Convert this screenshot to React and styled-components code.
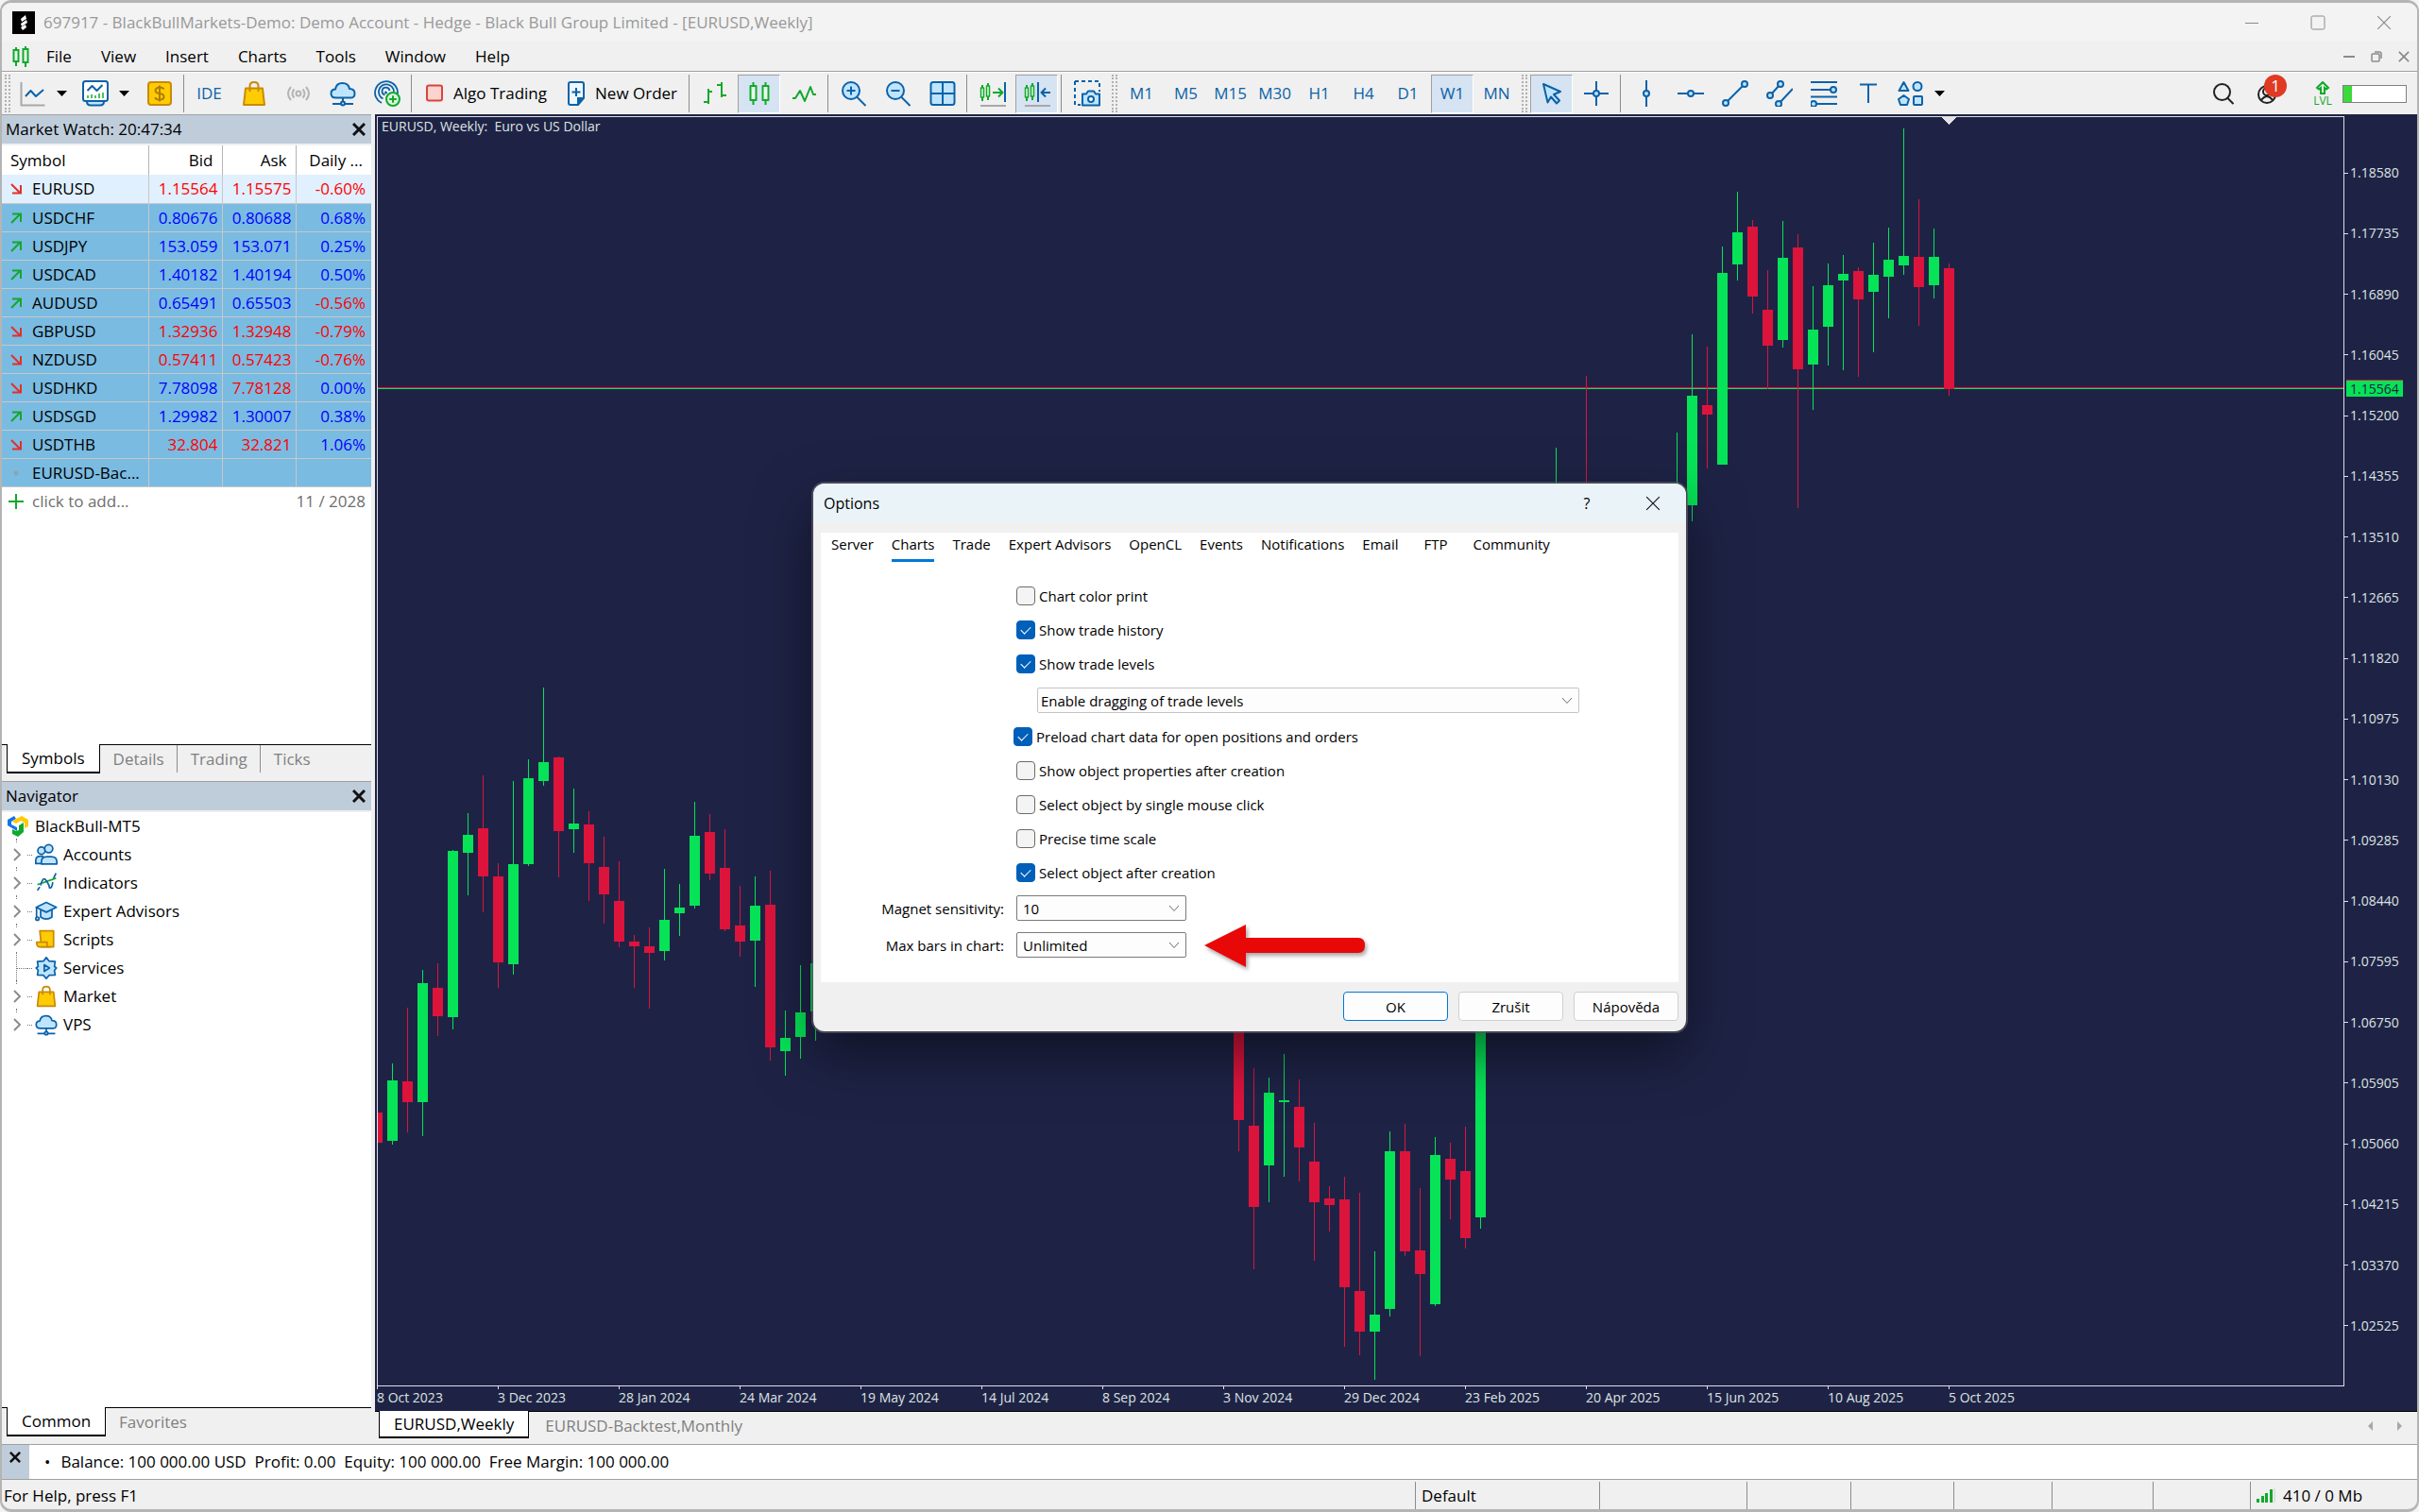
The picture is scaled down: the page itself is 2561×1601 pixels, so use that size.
import React from 'react'
import styled, { createGlobalStyle, css } from 'styled-components'

const ink = '#0b62a8'
const sky = '#bfe4ff'
const green = '#12a82c'
const gold = '#ffcb05'
const goldDark = '#c98a06'

// ---------- data ----------

const menu = ['File', 'View', 'Insert', 'Charts', 'Tools', 'Window', 'Help']
const timeframes = ['M1', 'M5', 'M15', 'M30', 'H1', 'H4', 'D1', 'W1', 'MN']

// symbol, direction, bid, ask, daily change, colours of the three numbers
const quotes = [
  ['EURUSD', 'down', '1.15564', '1.15575', '-0.60%', 'rrr'],
  ['USDCHF', 'up', '0.80676', '0.80688', '0.68%', 'bbb'],
  ['USDJPY', 'up', '153.059', '153.071', '0.25%', 'bbb'],
  ['USDCAD', 'up', '1.40182', '1.40194', '0.50%', 'bbb'],
  ['AUDUSD', 'up', '0.65491', '0.65503', '-0.56%', 'bbr'],
  ['GBPUSD', 'down', '1.32936', '1.32948', '-0.79%', 'rrr'],
  ['NZDUSD', 'down', '0.57411', '0.57423', '-0.76%', 'rrr'],
  ['USDHKD', 'down', '7.78098', '7.78128', '0.00%', 'brb'],
  ['USDSGD', 'up', '1.29982', '1.30007', '0.38%', 'bbb'],
  ['USDTHB', 'down', '32.804', '32.821', '1.06%', 'rrb'],
  ['EURUSD-Bac...', 'none', '', '', '', 'bbb']
]

const tree = [
  ['Accounts', 'accounts', true],
  ['Indicators', 'indicators', true],
  ['Expert Advisors', 'experts', true],
  ['Scripts', 'scripts', true],
  ['Services', 'services', false],
  ['Market', 'bag', true],
  ['VPS', 'cloud', true]
]

const prices = Array.from({ length: 20 }, (_, i) =>
  (1.1858 - i * 0.00845).toFixed(5)
)

const dates = [
  '8 Oct 2023',
  '3 Dec 2023',
  '28 Jan 2024',
  '24 Mar 2024',
  '19 May 2024',
  '14 Jul 2024',
  '8 Sep 2024',
  '3 Nov 2024',
  '29 Dec 2024',
  '23 Feb 2025',
  '20 Apr 2025',
  '15 Jun 2025',
  '10 Aug 2025',
  '5 Oct 2025'
]

// bar index, up (1) or down (0), high, body top, body bottom, low
const candles = [
  [0, 0, 1176, 1178, 1210, 1212],
  [1, 1, 1126, 1144, 1208, 1212],
  [2, 0, 1067, 1145, 1167, 1199],
  [3, 1, 1027, 1041, 1167, 1203],
  [4, 0, 1020, 1046, 1076, 1097],
  [5, 1, 900, 901, 1077, 1090],
  [6, 1, 861, 884, 903, 948],
  [7, 0, 821, 877, 928, 966],
  [8, 0, 914, 928, 1019, 1046],
  [9, 1, 827, 915, 1021, 1032],
  [10, 1, 804, 824, 915, 917],
  [11, 1, 728, 807, 827, 832],
  [12, 0, 801, 802, 880, 929],
  [13, 1, 835, 872, 878, 903],
  [14, 0, 859, 873, 914, 954],
  [15, 0, 886, 918, 947, 978],
  [16, 0, 912, 954, 997, 1003],
  [17, 0, 990, 997, 1002, 1046],
  [18, 0, 982, 1002, 1009, 1068],
  [19, 1, 920, 974, 1007, 1017],
  [20, 1, 936, 961, 967, 991],
  [21, 1, 849, 885, 959, 962],
  [22, 0, 862, 881, 925, 932],
  [23, 0, 878, 919, 984, 986],
  [24, 0, 938, 980, 997, 1013],
  [25, 1, 928, 959, 996, 1045],
  [26, 0, 922, 958, 1109, 1123],
  [27, 1, 1070, 1099, 1113, 1139],
  [28, 1, 1022, 1072, 1098, 1121],
  [29, 1, 1010, 1020, 1071, 1102],
  [57, 0, 980, 1000, 1186, 1219],
  [58, 0, 1131, 1192, 1278, 1344],
  [59, 1, 1141, 1157, 1234, 1273],
  [60, 1, 1116, 1165, 1167, 1246],
  [61, 0, 1143, 1172, 1215, 1251],
  [62, 0, 1189, 1230, 1273, 1335],
  [63, 0, 1256, 1269, 1276, 1304],
  [64, 0, 1246, 1270, 1363, 1426],
  [65, 0, 1263, 1367, 1410, 1435],
  [66, 1, 1325, 1392, 1410, 1461],
  [67, 1, 1198, 1219, 1386, 1394],
  [68, 0, 1190, 1219, 1325, 1330],
  [69, 0, 1258, 1324, 1349, 1436],
  [70, 1, 1204, 1223, 1381, 1383],
  [71, 0, 1210, 1227, 1249, 1291],
  [72, 0, 1193, 1240, 1311, 1322],
  [73, 1, 900, 940, 1289, 1301],
  [78, 1, 474, 560, 600, 640],
  [80, 0, 398, 560, 620, 650],
  [86, 1, 458, 560, 600, 620],
  [87, 1, 354, 419, 535, 552],
  [88, 0, 367, 429, 439, 496],
  [89, 1, 261, 289, 492, 492],
  [90, 1, 203, 246, 280, 297],
  [91, 0, 233, 240, 314, 332],
  [92, 0, 286, 328, 366, 412],
  [93, 1, 234, 273, 360, 368],
  [94, 0, 248, 262, 391, 538],
  [95, 1, 303, 349, 386, 434],
  [96, 1, 279, 302, 346, 387],
  [97, 1, 270, 290, 297, 392],
  [98, 0, 283, 287, 317, 399],
  [99, 1, 257, 291, 309, 373],
  [100, 1, 241, 275, 293, 337],
  [101, 1, 136, 271, 281, 291],
  [102, 0, 211, 272, 304, 345],
  [103, 1, 242, 272, 302, 316],
  [104, 0, 279, 284, 412, 419]
]

// ---------- icons ----------

const glyphs = {
  line: (
    <>
      <path d="M1.5 2v24.500h25" stroke="#a8a8a8" />
      <path d="M6 17l5.500-6 5.500 6 8-7" stroke={ink} />
    </>
  ),
  indicator: (
    <>
      <path d="M5 22.500q0 4 4 4h10q4 0 4-4" stroke={ink} fill={sky} />
      <rect x="1" y="1" width="26" height="21" rx="2.500" stroke={ink} fill="#fff" />
      <path d="M5.500 11l5-5 5 5 6-6" stroke={ink} />
      <path d="M6 19v-3M10 19v-4M14 19v-3M18 19v-5M22 19v-6" stroke={green} strokeWidth="1.500" />
    </>
  ),
  dollar: (
    <>
      <rect x="2" y="2" width="24" height="24" rx="3" fill={gold} stroke={goldDark} />
      <path
        d="M18.500 9.500q-1-2-4.500-2t-4.500 3q0 3 4.500 3.500t4.500 3.500q0 3-4.500 3t-4.500-2.500M14 5.500v17"
        stroke="#b07a00"
      />
    </>
  ),
  bag: (
    <>
      <path d="M5 8.500h18l2 17.500H3z" fill={gold} stroke={goldDark} />
      <path d="M9.500 12V6q0-4 4.500-4t4.500 4v6" stroke={goldDark} />
    </>
  ),
  signal: (
    <g stroke="#b4b4b4">
      <circle cx="14" cy="14" r="2.500" />
      <path d="M9.500 9.500q-4 4.500 0 9M18.500 9.500q4 4.500 0 9M6 7q-6 7 0 14M22 7q6 7 0 14" />
    </g>
  ),
  cloud: (
    <>
      <path
        d="M6.500 18.500q-5 0-5-4.500t4.500-4.500q1-6.500 7.500-6.500t7.500 6q5.500 0 5.500 5t-5 4.500z"
        fill={sky}
        stroke={ink}
      />
      <path d="M14 18.500v4M3 25h22" stroke={ink} />
      <circle cx="14" cy="24.500" r="2" fill={sky} stroke={ink} />
    </>
  ),
  radar: (
    <>
      <path
        d="M8 24A12 12 0 1 1 25 14M9.500 19.500A8 8 0 1 1 21 12M11.500 15.500A4 4 0 1 1 16.500 11"
        stroke={ink}
        strokeWidth="1.800"
      />
      <circle cx="12.500" cy="13" r="1.500" fill={ink} />
      <circle cx="20" cy="20" r="7" fill="#d9f7dc" stroke={green} />
      <path d="M20 16.200v7.600M16.200 20h7.600" stroke={green} />
    </>
  ),
  stop: <rect x="1" y="5.500" width="16" height="16" rx="2" fill="#fbd3cf" stroke="#d8453b" />,
  order: (
    <>
      <path d="M1 4q0-2 2-2h12q2 0 2 2v15l-6 7H3q-2 0-2-2z" fill="#eef8ff" stroke={ink} />
      <path d="M17 19h-6v7" fill={ink} stroke={ink} />
      <path d="M9 8v9M4.500 12.500h9" stroke={ink} />
    </>
  ),
  bars: (
    <path d="M7 9v16M2 23h5M7 12h4M21 2v16M16 5h5M21 16h5" stroke={green} strokeWidth="2" />
  ),
  candles: (
    <g stroke={green}>
      <path d="M7.500 2v24M20.500 2v24" />
      <rect x="4.500" y="6" width="6" height="15" fill="#e6fbe8" />
      <rect x="17.500" y="6" width="6" height="15" fill="#e6fbe8" />
    </g>
  ),
  zigzag: <path d="M2 19h3l5-8 5 11 6-15 3 8h3" stroke={green} />,
  zoomIn: (
    <>
      <circle cx="11" cy="11" r="9" fill={sky} stroke={ink} />
      <path d="M17.500 18l9 9M6.500 11h9M11 6.500v9" stroke={ink} />
    </>
  ),
  zoomOut: (
    <>
      <circle cx="11" cy="11" r="9" fill={sky} stroke={ink} />
      <path d="M17.500 18l9 9M6.500 11h9" stroke={ink} />
    </>
  ),
  tiles: (
    <>
      <rect x="1.500" y="2" width="25" height="24" rx="2.500" fill={sky} stroke={ink} />
      <path d="M14 2v24M1.500 14h25" stroke={ink} />
    </>
  ),
  scroll: (
    <>
      <path d="M3 5v17M9 3v18" stroke={green} />
      <path d="M1.500 8h3v10h-3zM7.500 6h3v11h-3z" fill="#e6fbe8" stroke={green} strokeWidth="1.500" />
      <path d="M14 13h10M20 8.500l4.500 4.500-4.500 4.500" stroke={green} />
      <path d="M27 2v21" stroke={ink} />
      <path d="M1 27h27" stroke="#a8a8a8" />
    </>
  ),
  shift: (
    <>
      <path d="M3 5v17M9 3v18" stroke={green} />
      <path d="M1.500 8h3v10h-3zM7.500 6h3v11h-3z" fill="#e6fbe8" stroke={green} strokeWidth="1.500" />
      <path d="M15 2v21M28 13h-9M23 8.500L18.500 13l4.500 4.500" stroke={ink} />
      <path d="M1 27h27" stroke="#a8a8a8" />
    </>
  ),
  camera: (
    <>
      <path d="M1 1h26v11M1 1v25h6" stroke={ink} strokeDasharray="4 3" />
      <path d="M9 14.500h4l2-3h6l2 3h4v12H9z" fill={sky} stroke={ink} />
      <circle cx="18" cy="20" r="3" fill="#fff" stroke={ink} />
    </>
  ),
  cursor: <path d="M5 4l18 8-7 3 6 6.500-3 3-6-7-3.500 6z" fill={sky} stroke={ink} />,
  cross: (
    <>
      <path d="M14 1v26M1 14h26" stroke={ink} />
      <circle cx="14" cy="14" r="3" fill={sky} stroke={ink} />
    </>
  ),
  vline: (
    <>
      <path d="M14 0v28" stroke={ink} />
      <circle cx="14" cy="14" r="3" fill={sky} stroke={ink} />
    </>
  ),
  hline: (
    <>
      <path d="M0 14h28" stroke={ink} />
      <circle cx="14" cy="14" r="3" fill={sky} stroke={ink} />
    </>
  ),
  trend: (
    <>
      <path d="M4 24L24 4" stroke={ink} />
      <circle cx="4" cy="24" r="3" fill={sky} stroke={ink} />
      <circle cx="24" cy="4" r="3" fill={sky} stroke={ink} />
    </>
  ),
  channel: (
    <>
      <path d="M4 16L15 4M13 25L28 9" stroke={ink} />
      <circle cx="4" cy="16" r="3" fill={sky} stroke={ink} />
      <circle cx="15" cy="4" r="3" fill={sky} stroke={ink} />
      <circle cx="13" cy="25" r="3" fill={sky} stroke={ink} />
    </>
  ),
  fibo: (
    <>
      <path d="M0 2h28M0 10h22M0 17.500h28M5 25h23" stroke={ink} />
      <circle cx="24" cy="10" r="3" fill={sky} stroke={ink} />
      <circle cx="3" cy="25" r="3" fill={sky} stroke={ink} />
    </>
  ),
  text: <path d="M5 4.500h18M14 4.500V24" stroke={ink} />,
  shapes: (
    <g fill={sky} stroke={ink}>
      <path d="M6.500 2l5 9h-10z" />
      <circle cx="21" cy="6.500" r="4.500" />
      <path d="M6.500 16l5.500 4-2 6H3l-2-6z" />
      <rect x="17" y="17" width="9" height="9" rx="1" />
    </g>
  ),
  search: (
    <>
      <circle cx="12.500" cy="12.500" r="8.500" stroke="#222" />
      <path d="M18.500 19l6 6" stroke="#222" />
    </>
  ),
  user: (
    <g stroke="#222">
      <circle cx="13" cy="15" r="9" />
      <circle cx="13" cy="12" r="4" />
      <path d="M7 21q6-8 12 0" />
    </g>
  ),
  levelUp: (
    <path d="M14 1l6 6-2 1.500L16 7v6h-4V7l-2 1.500L8 7z" fill="#d9f7dc" stroke={green} />
  ),
  accounts: (
    <g fill={sky} stroke={ink}>
      <circle cx="8" cy="9" r="4.500" />
      <path d="M1 25v-4q0-5 6-5h3v9z" />
      <circle cx="17" cy="6.500" r="5" />
      <path d="M8 25.500v-3q0-6 7-6h5q7 0 7 6v3z" />
    </g>
  ),
  indicators: (
    <>
      <path d="M3 16l23-8" stroke={green} />
      <path d="M3 23l3-4M7 17q3-12 7-6t4 9q3 1 4-7M23 8l3-6" stroke={ink} />
    </>
  ),
  experts: (
    <g fill={sky} stroke={ink}>
      <path d="M7 12v9q7 5 14 0v-9" />
      <path d="M14 3l12.500 6L14 15 1.500 9z" />
      <path d="M2 9v12" />
      <circle cx="3" cy="23" r="2" />
    </g>
  ),
  scripts: (
    <g fill={gold} stroke={goldDark}>
      <path d="M6 3h17v20H8z" />
      <path d="M2 17h13v6h4H6q-4 0-4-6z" />
    </g>
  ),
  services: (
    <g fill={sky} stroke={ink}>
      <path d="M14 1l3.500 4.500 7.500.5-1 6 2.500 2L24 17l1 5.500-7.500.5L14 27l-3.500-4-7.500-.5L4 17l-2.500-3L4 12 3 6l7.500-.5z" />
      <path d="M11.500 10v8l6.500-4z" />
    </g>
  )
}

const Icon = ({ name, size = 28 }) => (
  <svg
    width={size}
    height={size}
    viewBox="0 0 28 28"
    fill="none"
    strokeWidth="2"
    strokeLinejoin="round"
    aria-hidden="true"
  >
    {glyphs[name]}
  </svg>
)

const NarrowIcon = ({ name }) => (
  <svg width="18" height="28" viewBox="0 0 18 28" fill="none" strokeWidth="2" aria-hidden="true">
    {glyphs[name]}
  </svg>
)

const Caret = () => (
  <svg width="11" height="8" viewBox="0 0 11 8" aria-hidden="true">
    <path d="M0 1h11L5.500 7z" />
  </svg>
)

const Cross = ({ size = 14, weight = 3, color = '#111' }) => (
  <svg width={size} height={size} viewBox="0 0 14 14" stroke={color} strokeWidth={weight} aria-hidden="true">
    <path d="M1 1l12 12M13 1L1 13" />
  </svg>
)

const Chevron = () => (
  <svg width="12" height="8" viewBox="0 0 12 8" fill="none" stroke="#6b6b6b" aria-hidden="true">
    <path d="M1 1l5 5.500L11 1" />
  </svg>
)

const Direction = ({ dir }) => (
  <svg width="12" height="12" viewBox="0 0 12 12" fill="none" strokeWidth="2" aria-hidden="true">
    {dir === 'up' && <path d="M1 11L10 2M2 1.500h9V10" stroke={green} />}
    {dir === 'down' && <path d="M1 1l9 9M11 2v8.500H2" stroke="#e0312b" />}
    {dir === 'none' && <circle cx="6" cy="6" r="2.500" fill="#8fa3ad" />}
  </svg>
)

// ---------- sections ----------

const TitleBar = () => (
  <Title>
    <AppLogo viewBox="0 0 24 24" aria-hidden="true">
      <rect width="24" height="24" />
      <path d="M14 4l-5 4 1 3 5-3zM15 9l-6 4 1 3 6-4zM14 14l-5 3 2 3 4-3z" fill="#fff" />
    </AppLogo>
    <h1>697917 - BlackBullMarkets-Demo: Demo Account - Hedge - Black Bull Group Limited - [EURUSD,Weekly]</h1>
    <WindowButton aria-label="Minimize">
      <svg width="14" height="14" stroke="#8a8a8a"><path d="M0 7.500h14" /></svg>
    </WindowButton>
    <WindowButton aria-label="Maximize">
      <svg width="16" height="16" stroke="#8a8a8a" fill="none"><rect x="1" y="1" width="14" height="14" rx="1.500" /></svg>
    </WindowButton>
    <WindowButton aria-label="Close">
      <Cross size={16} weight={1} color="#8a8a8a" />
    </WindowButton>
  </Title>
)

const MenuBar = () => (
  <Menu>
    <svg width="18" height="22" viewBox="0 0 18 22" fill="none" stroke={green} strokeWidth="2" aria-hidden="true">
      <path d="M4 1v20M14 0v22" />
      <path d="M1.500 4h5v12h-5zM11.500 3h5v14h-5z" fill="#e6fbe8" />
    </svg>
    {menu.map(item => (
      <MenuItem key={item}>{item}</MenuItem>
    ))}
    <MdiButtons>
      <MdiButton aria-label="Minimize chart">
        <svg width="12" height="12" stroke="#8a8a8a" strokeWidth="2"><path d="M0 6h12" /></svg>
      </MdiButton>
      <MdiButton aria-label="Restore chart">
        <svg width="12" height="12" stroke="#8a8a8a" strokeWidth="1.500" fill="none">
          <rect x="1" y="3" width="8" height="8" rx="1" />
          <path d="M4 1h5q2 0 2 2v5" />
        </svg>
      </MdiButton>
      <MdiButton aria-label="Close chart">
        <Cross size={12} weight={2} color="#8a8a8a" />
      </MdiButton>
    </MdiButtons>
  </Menu>
)

const Tool = ({ icon, active }) => (
  <ToolButton aria-label={icon} $active={active}>
    <Icon name={icon} />
  </ToolButton>
)

const ToolBar = () => (
  <Tools>
    <Grip />
    <SplitButton aria-label="New chart">
      <Icon name="line" />
      <Caret />
    </SplitButton>
    <SplitButton aria-label="Indicators">
      <Icon name="indicator" />
      <Caret />
    </SplitButton>
    <Tool icon="dollar" />
    <Separator />
    <ToolButton>IDE</ToolButton>
    <Tool icon="bag" />
    <Tool icon="signal" />
    <Tool icon="cloud" />
    <Tool icon="radar" />
    <Separator />
    <LabelButton>
      <NarrowIcon name="stop" />
      Algo Trading
    </LabelButton>
    <LabelButton>
      <NarrowIcon name="order" />
      New Order
    </LabelButton>
    <Separator />
    <Tool icon="bars" />
    <Tool icon="candles" active />
    <Tool icon="zigzag" />
    <Separator />
    <Tool icon="zoomIn" />
    <Tool icon="zoomOut" />
    <Tool icon="tiles" />
    <Separator />
    <Tool icon="scroll" />
    <Tool icon="shift" active />
    <Separator />
    <Tool icon="camera" />
    <Grip />
    {timeframes.map(tf => (
      <ToolButton key={tf} $active={tf === 'W1'}>
        {tf}
      </ToolButton>
    ))}
    <Grip />
    <Tool icon="cursor" active />
    <Tool icon="cross" />
    <Separator />
    <Tool icon="vline" />
    <Tool icon="hline" />
    <Tool icon="trend" />
    <Tool icon="channel" />
    <Tool icon="fibo" />
    <Tool icon="text" />
    <SplitButton aria-label="Shapes">
      <Icon name="shapes" />
      <Caret />
    </SplitButton>
    <ToolsEnd>
      <PlainButton aria-label="Search">
        <Icon name="search" />
      </PlainButton>
      <PlainButton aria-label="Account">
        <Icon name="user" />
        <Badge>1</Badge>
      </PlainButton>
      <LevelGroup>
        <Level>
          <svg width="28" height="15" viewBox="0 0 28 15" fill="none" strokeWidth="2" aria-hidden="true">
            {glyphs.levelUp}
          </svg>
          LVL
        </Level>
        <LevelMeter />
      </LevelGroup>
    </ToolsEnd>
  </Tools>
)

const MarketWatch = () => (
  <Panel>
    <PanelHeader>
      Market Watch: 20:47:34
      <PlainButton aria-label="Close market watch">
        <Cross />
      </PlainButton>
    </PanelHeader>
    <PanelBody>
      <QuoteTable>
        <thead>
          <tr>
            <th>Symbol</th>
            <th>Bid</th>
            <th>Ask</th>
            <th>Daily ...</th>
          </tr>
        </thead>
        <tbody>
          {quotes.map(([symbol, dir, bid, ask, daily, tone], i) => (
            <QuoteRow key={symbol} $selected={i === 0}>
              <td>
                <SymbolCell>
                  <Direction dir={dir} />
                  {symbol}
                </SymbolCell>
              </td>
              <Num $tone={tone[0]}>{bid}</Num>
              <Num $tone={tone[1]}>{ask}</Num>
              <Num $tone={tone[2]}>{daily}</Num>
            </QuoteRow>
          ))}
        </tbody>
      </QuoteTable>
      <AddRow>
        <svg width="16" height="16" stroke={green} strokeWidth="2" aria-hidden="true">
          <path d="M8 0v16M0 8h16" />
        </svg>
        click to add...
        <span>11 / 2028</span>
      </AddRow>
    </PanelBody>
    <Tabs>
      <Tab $active>Symbols</Tab>
      <Tab>Details</Tab>
      <Tab $divided>Trading</Tab>
      <Tab $divided>Ticks</Tab>
    </Tabs>
  </Panel>
)

const Navigator = () => (
  <Panel>
    <PanelHeader>
      Navigator
      <PlainButton aria-label="Close navigator">
        <Cross />
      </PlainButton>
    </PanelHeader>
    <PanelBody>
      <TreeRoot>
        <svg width="22" height="22" viewBox="0 0 22 22" aria-hidden="true">
          <path d="M0 4l7-4 2 3-5 3v3l6 3v4L0 10z" fill="#1673e6" />
          <path d="M9 3l6-3 7 4v7l-4 2V7l-4-2-5 3-4-2z" fill={gold} />
          <path d="M12 10l5-3v10l-6 5-6-3v-5l4 2 3-1z" fill={green} />
        </svg>
        BlackBull-MT5
      </TreeRoot>
      {tree.map(([label, icon, branch]) => (
        <TreeRow key={label}>
          {branch ? (
            <Toggle aria-label={`Expand ${label}`}>
              <svg width="9" height="14" fill="none" stroke="#8c8c8c" strokeWidth="2">
                <path d="M1 1l6 6-6 6" />
              </svg>
            </Toggle>
          ) : (
            <Elbow />
          )}
          <Stub />
          <Icon name={icon} size={24} />
          {label}
        </TreeRow>
      ))}
    </PanelBody>
    <Tabs>
      <Tab $active>Common</Tab>
      <Tab>Favorites</Tab>
    </Tabs>
  </Panel>
)

const Chart = () => (
  <ChartArea>
    <ChartGrid>
      <Plot>
        <PlotTitle>EURUSD, Weekly:&nbsp; Euro vs US Dollar</PlotTitle>
        <svg width="100%" height="100%" shapeRendering="crispEdges" aria-label="EURUSD weekly candles">
          <rect y="286" width="100%" height="1" fill="#dc143c" />
          <rect y="287" width="100%" height="1" fill="#20d860" />
          <g transform="translate(-1 -124)">
            {candles.map(([i, up, high, top, bottom, low]) => (
              <g key={i} fill={up ? '#06e357' : '#dc143c'}>
                <rect x={i * 16} y={high} width="1" height={low - high} />
                <rect x={i * 16 - 5} y={top} width="11" height={bottom - top} />
              </g>
            ))}
            <path d="M1657 124h15l-7.500 8z" fill="#e4e4e4" />
          </g>
        </svg>
      </Plot>
      <PriceAxis>
        {prices.map(p => (
          <PriceTick key={p}>{p}</PriceTick>
        ))}
        <PriceTag>1.15564</PriceTag>
      </PriceAxis>
      <TimeAxis>
        {dates.map(d => (
          <TimeTick key={d}>{d}</TimeTick>
        ))}
      </TimeAxis>
    </ChartGrid>
    <Tabs>
      <Tab $active>EURUSD,Weekly</Tab>
      <Tab>EURUSD-Backtest,Monthly</Tab>
      <TabScroll>
        <svg width="5" height="10" fill="#a8a8a8"><path d="M5 0v10L0 5z" /></svg>
        <svg width="5" height="10" fill="#a8a8a8"><path d="M0 0v10l5-5z" /></svg>
      </TabScroll>
    </Tabs>
  </ChartArea>
)

const Check = ({ label, checked, outdent }) => (
  <CheckRow $outdent={outdent}>
    <CheckBox defaultChecked={checked} />
    {label}
  </CheckRow>
)

const Dropdown = ({ id, value, label, wide }) => (
  <SelectWrap $wide={wide}>
    <Select id={id} aria-label={label} $wide={wide} defaultValue={value}>
      <option>{value}</option>
    </Select>
    <Chevron />
  </SelectWrap>
)

const OptionsDialog = () => (
  <Dialog role="dialog" aria-labelledby="options-title">
    <DialogTitle>
      <h2 id="options-title">Options</h2>
      <WindowButton aria-label="Help">?</WindowButton>
      <WindowButton aria-label="Close options">
        <Cross size={16} weight={1} />
      </WindowButton>
    </DialogTitle>
    <DialogPage>
      <DialogTabs>
        <DialogTab>Server</DialogTab>
        <DialogTab $active>Charts</DialogTab>
        <DialogTab>Trade</DialogTab>
        <DialogTab>Expert Advisors</DialogTab>
        <DialogTab>OpenCL</DialogTab>
        <DialogTab>Events</DialogTab>
        <DialogTab>Notifications</DialogTab>
        <DialogTab>Email</DialogTab>
        <DialogTab $roomy>FTP</DialogTab>
        <DialogTab>Community</DialogTab>
      </DialogTabs>
      <Form>
        <Check label="Chart color print" />
        <Check label="Show trade history" checked />
        <Check label="Show trade levels" checked />
        <IndentRow>
          <Dropdown label="Trade levels" value="Enable dragging of trade levels" wide />
        </IndentRow>
        <Check label="Preload chart data for open positions and orders" checked outdent />
        <Check label="Show object properties after creation" />
        <Check label="Select object by single mouse click" />
        <Check label="Precise time scale" />
        <Check label="Select object after creation" checked />
        <FieldRow>
          <label htmlFor="magnet">Magnet sensitivity:</label>
          <Dropdown id="magnet" value="10" />
        </FieldRow>
        <FieldRow>
          <label htmlFor="max-bars">Max bars in chart:</label>
          <Dropdown id="max-bars" value="Unlimited" />
          <Pointer viewBox="0 0 176 50" aria-hidden="true">
            <path d="M0 25L44 3v14h119q7 0 7 8t-7 8H44v15z" fill="#e90808" />
          </Pointer>
        </FieldRow>
      </Form>
    </DialogPage>
    <DialogFooter>
      <DialogButton $primary>OK</DialogButton>
      <DialogButton>Zrušit</DialogButton>
      <DialogButton>Nápověda</DialogButton>
    </DialogFooter>
  </Dialog>
)

export default function App() {
  return (
    <Window>
      <GlobalStyle />
      <TitleBar />
      <MenuBar />
      <ToolBar />
      <Workspace>
        <Sidebar>
          <MarketWatch />
          <Navigator />
        </Sidebar>
        <Chart />
      </Workspace>
      <TradeBar>
        <TradeBarHandle>
          <PlainButton aria-label="Close toolbox">
            <Cross size={12} />
          </PlainButton>
        </TradeBarHandle>
        <span>•</span>
        <p>
          Balance: 100 000.00 USD&nbsp; Profit: 0.00&nbsp; Equity: 100 000.00&nbsp; Free Margin: 100 000.00
        </p>
      </TradeBar>
      <StatusBar>
        <StatusCell $grow>For Help, press F1</StatusCell>
        <StatusCell $w={195}>Default</StatusCell>
        <StatusCell $w={156} />
        <StatusCell $w={110} />
        <StatusCell $w={109} />
        <StatusCell $w={104} />
        <StatusCell $w={107} />
        <StatusCell $w={103} />
        <StatusCell $w={177}>
          <svg width="21" height="16" fill={green} aria-hidden="true">
            <path d="M0 11h3v4H0zM5 8h3v7H5zM9 5h3v10H9zM14 1h3v14h-3z" />
            <path d="M18 0h2v15h-2z" fill="#ddd" />
          </svg>
          410 / 0 Mb
        </StatusCell>
      </StatusBar>
      <OptionsDialog />
    </Window>
  )
}

// ---------- styles ----------

const GlobalStyle = createGlobalStyle`
  * {
    box-sizing: border-box;
  }

  body {
    margin: 0;
    background: #f4f4f4;
    font-family: 'Open Sans', 'Noto Sans', sans-serif;
    font-size: 17px;
    line-height: 22px;
    color: #000;
  }

  button,
  select,
  input {
    font: inherit;
    color: inherit;
    margin: 0;
  }

  h1,
  h2,
  p {
    margin: 0;
    font-size: inherit;
    font-weight: 400;
  }

  svg {
    display: block;
    flex-shrink: 0;
  }
`

const Window = styled.div`
  position: relative;
  display: flex;
  flex-direction: column;
  min-height: 100vh;
  border: solid #b4b4b4;
  border-width: 3px 2px;
  border-radius: 12px;
  background: #f0f0f0;
  overflow: hidden;
`

const PlainButton = styled.button`
  position: relative;
  padding: 0;
  border: 0;
  background: none;
`

const Title = styled.header`
  display: flex;
  align-items: center;
  height: 41px;
  padding-left: 11px;
  background: #f3f3f3;
  color: #999;

  h1 {
    flex: 1;
    white-space: nowrap;
  }
`

const AppLogo = styled.svg`
  width: 24px;
  height: 24px;
  margin-right: 9px;
`

const WindowButton = styled.button`
  display: flex;
  align-items: center;
  justify-content: center;
  width: 70px;
  height: 40px;
  padding: 0;
  border: 0;
  background: none;
`

const Menu = styled.nav`
  display: flex;
  align-items: center;
  height: 32px;
  padding-left: 11px;
  border-bottom: 1px solid #a0a0a0;
`

const MenuItem = styled.button`
  padding: 0 16px 0 15px;
  border: 0;
  background: none;

  &:first-of-type {
    padding-left: 18px;
  }
`

const MdiButtons = styled.div`
  display: flex;
  margin-left: auto;
`

const MdiButton = styled.button`
  display: flex;
  justify-content: center;
  width: 29px;
  padding: 0;
  border: 0;
  background: none;
`

const Tools = styled.div`
  display: flex;
  align-items: center;
  height: 45px;
  border-top: 1px solid #fff;
`

const Grip = styled.div`
  width: 6px;
  height: 40px;
  margin: 0 2px 0 3px;
  border: dotted #b0b0b0;
  border-width: 0 2px;
`

const Separator = styled.div`
  width: 1px;
  height: 40px;
  margin: 0 3px 0 2px;
  background: #8c8c8c;
`

const ToolButton = styled.button`
  display: flex;
  align-items: center;
  justify-content: center;
  width: 45px;
  height: 41px;
  margin: 0 1px;
  padding: 0;
  border: 1px solid transparent;
  background: none;
  color: ${ink};

  ${p =>
    p.$active &&
    css`
      border-color: #a0a0a0 #fff #fff #a0a0a0;
      background: #d6e3f2;
    `};
`

const SplitButton = styled.button`
  display: flex;
  align-items: center;
  gap: 11px;
  padding: 0 8px;
  border: 0;
  background: none;
`

const LabelButton = styled.button`
  display: flex;
  align-items: center;
  gap: 11px;
  padding: 0 10px 0 12px;
  border: 0;
  background: none;
  white-space: nowrap;
`

const ToolsEnd = styled.div`
  display: flex;
  align-items: center;
  gap: 19px;
  margin-left: auto;
  padding-right: 11px;
`

const Badge = styled.span`
  position: absolute;
  top: -6px;
  left: 10px;
  width: 24px;
  height: 24px;
  border-radius: 50%;
  background: #e03a22;
  color: #fff;
  line-height: 24px;
`

const LevelGroup = styled.div`
  display: flex;
  align-items: center;
  gap: 7px;
  margin-left: 11px;
`

const Level = styled.div`
  color: ${green};
  font-size: 12px;
  line-height: 12px;
  text-align: center;
`

const LevelMeter = styled.div`
  width: 68px;
  height: 19px;
  border: 1px solid #808080;
  background: linear-gradient(90deg, #3bd93b 9px, #fff 9px);
`

const Workspace = styled.main`
  display: flex;
  flex: 1;
`

const Sidebar = styled.aside`
  display: grid;
  grid-template-rows: 706fr 702fr;
  width: 391px;
  margin-right: 4px;
`

const Panel = styled.section`
  display: flex;
  flex-direction: column;
`

const PanelHeader = styled.div`
  display: flex;
  align-items: center;
  justify-content: space-between;
  height: 31px;
  margin-bottom: 2px;
  padding: 0 6px 0 4px;
  border-top: 1px solid #a0a0a0;
  background: #bfcddb;
`

const PanelBody = styled.div`
  flex: 1;
  background: #fff;
`

const QuoteTable = styled.table`
  width: 100%;
  border-collapse: collapse;
  table-layout: fixed;

  th {
    width: 78px;
    height: 31px;
    padding: 0 9px;
    border-right: 1px solid #b4b4b4;
    font-weight: 400;
    text-align: right;
    white-space: nowrap;
  }

  th:first-child {
    width: 155px;
    text-align: left;
  }

  th:last-child {
    width: auto;
    border-right: 0;
  }
`

const QuoteRow = styled.tr`
  background: ${p => (p.$selected ? '#e0f0fe' : '#7abbe1')};

  td {
    height: 30px;
    padding: 1px 4px 0 9px;
    border: solid #c8c8c8;
    border-width: 0 1px 1px 0;
  }

  td:last-child {
    padding-right: 6px;
    border-right: 0;
  }
`

const SymbolCell = styled.div`
  display: flex;
  align-items: center;
  gap: 11px;
  white-space: nowrap;
`

const Num = styled.td`
  color: ${p => (p.$tone === 'r' ? '#ff0000' : '#0000ff')};
  text-align: right;

  ${QuoteRow} & {
    padding-left: 0;
  }
`

const AddRow = styled.div`
  display: flex;
  align-items: center;
  gap: 9px;
  height: 31px;
  padding: 0 6px 0 7px;
  color: #6e6e6e;

  span {
    margin-left: auto;
  }
`

const Tabs = styled.div`
  display: flex;
  height: 39px;
  padding-left: 5px;
  border-top: 1px solid #000;
`

const Tab = styled.button`
  height: 29px;
  padding: 0 14px;
  border: 0;
  background: none;
  color: #808080;

  ${p =>
    p.$divided &&
    css`
      box-shadow: -1px 0 0 #8c8c8c;
    `};

  ${p =>
    p.$active &&
    css`
      height: 31px;
      margin-top: -1px;
      padding: 0 15px;
      border: solid #000;
      border-width: 0 1px 2px;
      background: #fff;
      color: #000;
    `};
`

const TabScroll = styled.div`
  display: flex;
  gap: 26px;
  margin-left: auto;
  padding: 10px 16px 0 0;
`

const TreeRoot = styled.div`
  display: flex;
  align-items: center;
  gap: 7px;
  height: 30px;
  padding-left: 6px;
`

const TreeRow = styled.div`
  position: relative;
  display: flex;
  align-items: center;
  height: 30px;
  padding-left: 5px;

  &::before {
    content: '';
    position: absolute;
    top: -2px;
    left: 15px;
    height: 4px;
    border-left: 1px dotted #777;
  }

  > svg {
    margin: 0 6px 0 3px;
  }
`

const Toggle = styled.button`
  display: flex;
  justify-content: center;
  width: 22px;
  padding: 0;
  border: 0;
  background: none;
`

const Elbow = styled.div`
  width: 12px;
  height: 34px;
  margin-left: 10px;
  border-left: 1px dotted #777;
  background: linear-gradient(90deg, #777 50%, transparent 50%) 0 17px / 2px 1px repeat-x;
`

const Stub = styled.div`
  width: 5px;
  border-top: 1px dotted #777;
`

const ChartArea = styled.section`
  display: flex;
  flex: 1;
  flex-direction: column;
  min-width: 0;

  > ${Tabs} {
    height: 35px;
    padding-left: 4px;
    gap: 3px;
  }

  ${Tab} {
    height: 29px;
  }
`

const ChartGrid = styled.div`
  display: grid;
  grid-template: 1fr 26px / 1fr 77px;
  flex: 1;
  padding: 2px 0 0 2px;
  background: #1e2346;
  color: #dfe3e0;
  font-size: 14px;
  line-height: 18px;
`

const Plot = styled.div`
  position: relative;
  border: 1px solid #dcdfe4;

  > svg {
    position: absolute;
    inset: 0;
  }
`

const PlotTitle = styled.div`
  padding: 1px 4px;
`

const PriceAxis = styled.div`
  position: relative;
  display: flex;
  flex-direction: column;
  justify-content: space-between;
  padding: 51px 0 55px;
`

const PriceTick = styled.div`
  display: flex;
  align-items: center;
  gap: 2px;

  &::before {
    content: '';
    width: 4px;
    height: 1px;
    background: #dcdfe4;
  }
`

const PriceTag = styled.div`
  position: absolute;
  top: 279px;
  left: 2px;
  width: 60px;
  height: 18px;
  padding-left: 4px;
  border-top: 1px solid #dc143c;
  background: #06e357;
  color: #1e2346;
  line-height: 17px;
`

const TimeAxis = styled.div`
  display: flex;
  grid-column: 1 / -1;
`

const TimeTick = styled.div`
  flex: 0 0 128px;

  &::before {
    content: '';
    display: block;
    width: 1px;
    height: 3px;
    background: #dcdfe4;
  }
`

const TradeBar = styled.div`
  display: flex;
  align-items: center;
  height: 37px;
  border-top: 1px solid #a0a0a0;
  background: #fff;

  > span {
    margin: 0 11px 0 16px;
  }
`

const TradeBarHandle = styled.div`
  width: 29px;
  height: 36px;
  padding: 2px 0 0 8px;
  background: #bfcddb;
`

const StatusBar = styled.footer`
  display: flex;
  height: 32px;
  padding-top: 2px;
  border-top: 1px solid #a0a0a0;
`

const StatusCell = styled.div`
  display: flex;
  align-items: center;
  gap: 7px;
  width: ${p => p.$w}px;
  padding-left: 6px;
  border-left: 1px solid #8c8c8c;

  ${p =>
    p.$grow &&
    css`
      flex: 1;
      padding-left: 2px;
      border-left: 0;
    `};
`

const Dialog = styled.div`
  position: absolute;
  top: 509px;
  left: 859px;
  width: 924px;
  border-radius: 12px;
  background: #f0f0f0;
  box-shadow: 0 0 0 2px rgba(88, 88, 100, 0.7), 0 24px 60px rgba(0, 0, 0, 0.5);
  font-size: 15px;
  line-height: 20px;
  overflow: hidden;
`

const DialogTitle = styled.div`
  display: flex;
  align-items: center;
  height: 41px;
  margin-bottom: 11px;
  padding-left: 11px;
  background: #eaf4f8;
  font-size: 16px;

  h2 {
    flex: 1;
  }
`

const DialogPage = styled.div`
  margin: 0 8px;
  background: #fff;
`

const DialogTabs = styled.div`
  display: flex;
  padding-left: 11px;
  gap: 19px;
`

const DialogTab = styled.button`
  height: 31px;
  margin: ${p => (p.$roomy ? '0 8px' : '0')};
  padding: 0 0 4px;
  border: 0;
  border-bottom: 3px solid ${p => (p.$active ? '#0078d7' : 'transparent')};
  background: none;
`

const Form = styled.div`
  padding: 18px 0 20px 207px;
`

const CheckRow = styled.label`
  display: flex;
  align-items: center;
  gap: 4px;
  height: 36px;
  margin-left: ${p => (p.$outdent ? '-3px' : '0')};
`

const CheckBox = styled.input.attrs({ type: 'checkbox' })`
  display: grid;
  place-items: center;
  width: 20px;
  height: 20px;
  border: 1px solid #6b6b6b;
  border-radius: 4px;
  background: #f4f4f4;
  appearance: none;

  &:checked {
    border-color: #005fb8;
    background: #005fb8;
  }

  &:checked::before {
    content: '';
    width: 9px;
    height: 5px;
    border: solid #fff;
    border-width: 0 0 1px 1px;
    transform: translateY(-1px) rotate(-45deg);
  }
`

const IndentRow = styled.div`
  display: flex;
  align-items: center;
  height: 41px;
  padding-left: 22px;
`

const FieldRow = styled.div`
  display: flex;
  align-items: center;
  height: 39px;
  margin-left: -207px;

  label {
    width: 194px;
    margin-right: 13px;
    text-align: right;
  }
`

const SelectWrap = styled.div`
  position: relative;
  width: ${p => (p.$wide ? 574 : 180)}px;

  > svg {
    position: absolute;
    top: 10px;
    right: 7px;
  }
`

const Select = styled.select`
  width: 100%;
  height: 27px;
  padding: 0 ${p => (p.$wide ? 3 : 6)}px;
  border: 1px solid ${p => (p.$wide ? '#c4c4c4' : '#7a7a7a')};
  border-radius: 2px;
  background: #fdfdfd;
  appearance: none;
`

const Pointer = styled.svg`
  width: 176px;
  height: 50px;
  margin-left: 19px;
  filter: drop-shadow(2px 3px 2px rgba(0, 0, 0, 0.35));
`

const DialogFooter = styled.div`
  display: flex;
  justify-content: flex-end;
  gap: 11px;
  padding: 10px 8px 11px;
`

const DialogButton = styled.button`
  width: 111px;
  height: 31px;
  padding: 0;
  border: 1px solid ${p => (p.$primary ? '#0078d4' : '#d0d0d0')};
  border-radius: 4px;
  background: #fdfdfd;
`
